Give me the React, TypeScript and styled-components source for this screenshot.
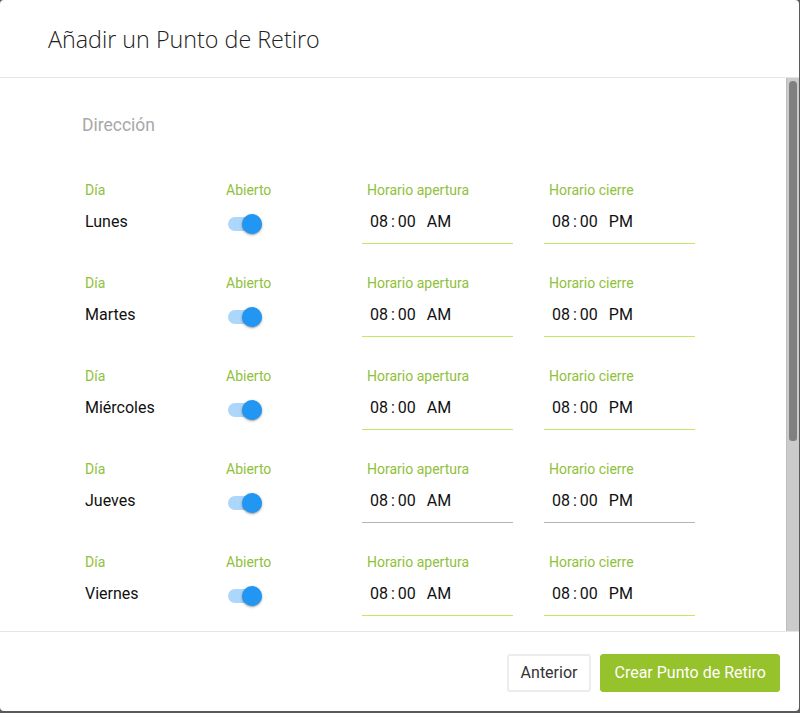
import React from 'react';
import styled, { createGlobalStyle } from 'styled-components';

const GlobalStyle = createGlobalStyle`
  html, body {
    margin: 0;
    padding: 0;
    background: #5a5a5a;
  }
  * { box-sizing: border-box; }
`;

const Modal = styled.div`
  width: 799px;
  height: 711px;
  background: #fff;
  border-radius: 4px;
  display: flex;
  flex-direction: column;
  overflow: hidden;
  font-family: Roboto, "Liberation Sans", sans-serif;
`;

const Header = styled.header`
  height: 78px;
  flex: none;
  display: flex;
  align-items: center;
  padding-left: 48px;
  border-bottom: 1px solid #e6e6e6;
  & h2 {
    margin: 0;
    font-family: "Open Sans", "Noto Sans", sans-serif;
    font-weight: 300;
    font-size: 23.3px;
    color: #222;
  }
`;

const Main = styled.div`
  flex: 1;
  min-height: 0;
  display: flex;
`;

const Body = styled.div`
  flex: 1;
  overflow: hidden;
  padding: 36px 0 60px 82px;
`;

const ScrollTrack = styled.div`
  width: 13px;
  flex: none;
  background: #cbcbcb;
  border-left: 1px solid #bdbdbd;
  padding: 3px 2px 0 2px;
`;

const ScrollThumb = styled.div`
  height: 360px;
  background: #808080;
  border-radius: 5px 5px 4px 4px;
`;

const Section = styled.div`
  font-size: 17.5px;
  line-height: 22px;
  color: #a8a8a8;
  margin-bottom: 46px;
`;

const Row = styled.div`
  display: grid;
  grid-template-columns: 141px 136px 182px 151px;
  margin-left: 3px;
  margin-bottom: 31px;
`;

const Cell = styled.div`
  display: flex;
  flex-direction: column;
`;

const Label = styled.span<{ $inset?: boolean }>`
  font-size: 14px;
  line-height: 16px;
  color: #8fc13a;
  padding-left: ${p => (p.$inset ? '5px' : '0')};
`;

const Value = styled.div`
  height: 46px;
  display: flex;
  align-items: center;
  font-size: 16px;
  color: #111;
`;

const TimeField = styled.div<{ $active: boolean }>`
  width: 151px;
  height: 46px;
  padding: 2px 0 0 8px;
  display: flex;
  align-items: center;
  font-size: 16px;
  color: #111;
  border-bottom: 1px solid ${p => (p.$active ? '#c2e85c' : '#b5b5b5')};
  & span.colon { margin: 0 3px; }
  & span.period { margin-left: 11px; }
`;

const Track = styled.span`
  position: relative;
  display: inline-block;
  width: 34px;
  height: 14px;
  margin: 6px 0 0 2px;
  border-radius: 7px;
  background: #acd6fa;
`;

const Thumb = styled.span`
  position: absolute;
  top: -3px;
  right: 0;
  width: 20px;
  height: 20px;
  border-radius: 50%;
  background: #2196f3;
  box-shadow: 0 1px 3px rgba(0, 0, 0, 0.3), 0 1px 1px rgba(0, 0, 0, 0.14);
`;

const Footer = styled.footer`
  height: 80px;
  flex: none;
  border-top: 1px solid #e6e6e6;
  display: flex;
  justify-content: flex-end;
  align-items: center;
  gap: 9px;
  padding: 2px 19px 0 0;
`;

const Button = styled.button<{ $primary?: boolean }>`
  height: 38px;
  padding: ${p => (p.$primary ? '0 13px' : '0 12px')};
  border-radius: 3px;
  font-family: Roboto, "Liberation Sans", sans-serif;
  font-size: 16px;
  cursor: pointer;
  border: ${p => (p.$primary ? '1px solid #96c22b' : '2px solid #ececec')};
  background: ${p => (p.$primary ? '#96c22b' : '#fff')};
  color: ${p => (p.$primary ? '#fff' : '#333')};
`;

const days = [
  { name: 'Lunes', active: true },
  { name: 'Martes', active: true },
  { name: 'Miércoles', active: true },
  { name: 'Jueves', active: false },
  { name: 'Viernes', active: true },
  { name: 'Sábado', active: true },
  { name: 'Domingo', active: true },
];

const Time = ({ period, active }: { period: string; active: boolean }) => (
  <TimeField $active={active}>
    <span>08</span>
    <span className="colon">:</span>
    <span>00</span>
    <span className="period">{period}</span>
  </TimeField>
);

export default function App() {
  return (
    <>
      <GlobalStyle />
      <Modal>
        <Header>
          <h2>Añadir un Punto de Retiro</h2>
        </Header>
        <Main>
          <Body>
            <Section>Dirección</Section>
            {days.map(d => (
              <Row key={d.name}>
                <Cell>
                  <Label>Día</Label>
                  <Value>{d.name}</Value>
                </Cell>
                <Cell>
                  <Label>Abierto</Label>
                  <Value>
                    <Track>
                      <Thumb />
                    </Track>
                  </Value>
                </Cell>
                <Cell>
                  <Label $inset>Horario apertura</Label>
                  <Time period="AM" active={d.active} />
                </Cell>
                <Cell>
                  <Label $inset>Horario cierre</Label>
                  <Time period="PM" active={d.active} />
                </Cell>
              </Row>
            ))}
          </Body>
          <ScrollTrack>
            <ScrollThumb />
          </ScrollTrack>
        </Main>
        <Footer>
          <Button>Anterior</Button>
          <Button $primary>Crear Punto de Retiro</Button>
        </Footer>
      </Modal>
    </>
  );
}
